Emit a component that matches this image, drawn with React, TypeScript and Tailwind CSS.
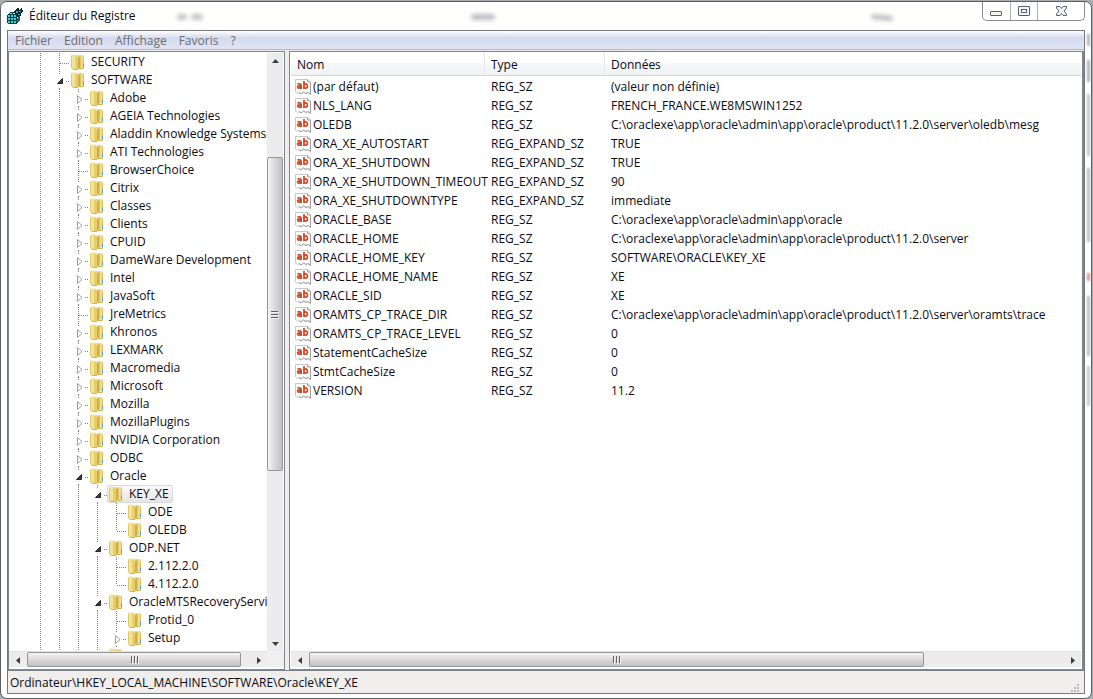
import React from "react";

type Toggle = "open" | "closed" | "leaf" | "last";
type Node = { label: string; depth: number; kind: Toggle; selected?: boolean };

const NODES: Node[] = [
  { label: "SECURITY", depth: 1, kind: "leaf" },
  { label: "SOFTWARE", depth: 1, kind: "open" },
  { label: "Adobe", depth: 2, kind: "closed" },
  { label: "AGEIA Technologies", depth: 2, kind: "closed" },
  { label: "Aladdin Knowledge Systems", depth: 2, kind: "closed" },
  { label: "ATI Technologies", depth: 2, kind: "closed" },
  { label: "BrowserChoice", depth: 2, kind: "leaf" },
  { label: "Citrix", depth: 2, kind: "closed" },
  { label: "Classes", depth: 2, kind: "closed" },
  { label: "Clients", depth: 2, kind: "closed" },
  { label: "CPUID", depth: 2, kind: "closed" },
  { label: "DameWare Development", depth: 2, kind: "closed" },
  { label: "Intel", depth: 2, kind: "closed" },
  { label: "JavaSoft", depth: 2, kind: "closed" },
  { label: "JreMetrics", depth: 2, kind: "leaf" },
  { label: "Khronos", depth: 2, kind: "closed" },
  { label: "LEXMARK", depth: 2, kind: "closed" },
  { label: "Macromedia", depth: 2, kind: "closed" },
  { label: "Microsoft", depth: 2, kind: "closed" },
  { label: "Mozilla", depth: 2, kind: "closed" },
  { label: "MozillaPlugins", depth: 2, kind: "closed" },
  { label: "NVIDIA Corporation", depth: 2, kind: "closed" },
  { label: "ODBC", depth: 2, kind: "closed" },
  { label: "Oracle", depth: 2, kind: "open" },
  { label: "KEY_XE", depth: 3, kind: "open", selected: true },
  { label: "ODE", depth: 4, kind: "leaf" },
  { label: "OLEDB", depth: 4, kind: "last" },
  { label: "ODP.NET", depth: 3, kind: "open" },
  { label: "2.112.2.0", depth: 4, kind: "leaf" },
  { label: "4.112.2.0", depth: 4, kind: "last" },
  { label: "OracleMTSRecoveryServic", depth: 3, kind: "open" },
  { label: "Protid_0", depth: 4, kind: "leaf" },
  { label: "Setup", depth: 4, kind: "closed" },
  { label: "", depth: 3, kind: "leaf" },
];

const VALUES: [string, string, string][] = [
  ["(par défaut)", "REG_SZ", "(valeur non définie)"],
  ["NLS_LANG", "REG_SZ", "FRENCH_FRANCE.WE8MSWIN1252"],
  ["OLEDB", "REG_SZ", "C:\\oraclexe\\app\\oracle\\admin\\app\\oracle\\product\\11.2.0\\server\\oledb\\mesg"],
  ["ORA_XE_AUTOSTART", "REG_EXPAND_SZ", "TRUE"],
  ["ORA_XE_SHUTDOWN", "REG_EXPAND_SZ", "TRUE"],
  ["ORA_XE_SHUTDOWN_TIMEOUT", "REG_EXPAND_SZ", "90"],
  ["ORA_XE_SHUTDOWNTYPE", "REG_EXPAND_SZ", "immediate"],
  ["ORACLE_BASE", "REG_SZ", "C:\\oraclexe\\app\\oracle\\admin\\app\\oracle"],
  ["ORACLE_HOME", "REG_SZ", "C:\\oraclexe\\app\\oracle\\admin\\app\\oracle\\product\\11.2.0\\server"],
  ["ORACLE_HOME_KEY", "REG_SZ", "SOFTWARE\\ORACLE\\KEY_XE"],
  ["ORACLE_HOME_NAME", "REG_SZ", "XE"],
  ["ORACLE_SID", "REG_SZ", "XE"],
  ["ORAMTS_CP_TRACE_DIR", "REG_SZ", "C:\\oraclexe\\app\\oracle\\admin\\app\\oracle\\product\\11.2.0\\server\\oramts\\trace"],
  ["ORAMTS_CP_TRACE_LEVEL", "REG_SZ", "0"],
  ["StatementCacheSize", "REG_SZ", "0"],
  ["StmtCacheSize", "REG_SZ", "0"],
  ["VERSION", "REG_SZ", "11.2"],
];

const DOTS = { stroke: "#808080", strokeDasharray: "1 1", fill: "none" };

function Guide() {
  return (
    <svg width="19" height="18" className="shrink-0" aria-hidden="true">
      <path d="M9.5 0V18" {...DOTS} />
    </svg>
  );
}

function Joint({ kind }: { kind: Toggle }) {
  return (
    <svg width="19" height="18" className="block" aria-hidden="true">
      {kind === "leaf" && <path d="M9.5 0V18M10 10.5H19" {...DOTS} />}
      {kind === "last" && <path d="M9.5 0V10M10 10.5H19" {...DOTS} />}
      {kind === "closed" && (
        <>
          <path d="M9.5 0V3M9.5 17V18M16 10.5H19" {...DOTS} />
          <path d="M8.5 6.5V14.5L13 10.5Z" fill="#fff" stroke="#a0a0a0" />
        </>
      )}
      {kind === "open" && (
        <>
          <path d="M9.5 0V3M9.5 17V18M16 10.5H19" {...DOTS} />
          <path d="M12.5 7.5V12.5H7.5Z" fill="#404040" stroke="#262626" strokeLinejoin="round" />
        </>
      )}
    </svg>
  );
}

function Folder() {
  return (
    <svg width="14" height="16" viewBox="0 0 14 16" className="shrink-0" aria-hidden="true">
      <path d="M5 1H11.5Q12.5 1 12.5 2V14.5H5Z" fill="#f0dd8c" />
      <path d="M12.5 2.5V14.5" stroke="#dcc25e" />
      <path d="M7 3L9.5 2V13L7 15Z" fill="#cfae48" />
      <path d="M0 1.5Q0 0.5 1 0.5H4.5Q7 1 7 3V15.5H2Q0 15 0 13.5Z" fill="#f3e49c" />
      <path d="M4 1.5Q7 2 7 4V15.5L4 14.5Z" fill="#e6cd6e" />
      <path d="M0.5 2V14" stroke="#e0c968" />
      <path d="M1 14.5L3 15.5H7L8 14.5H12.5" stroke="#d6b650" fill="none" />
      <path d="M12.5 9.5V13" stroke="#4da3d8" />
    </svg>
  );
}

function StringIcon() {
  return (
    <svg width="16" height="16" viewBox="0 0 16 16" className="shrink-0" aria-hidden="true">
      <path d="M0.5 0.5H12.5L15.5 3V15.5L13 13.5L11 14.5L8.5 13L6 15L4 13.5L2.5 14.5L0.5 13Z" fill="#fff" stroke="#c8c8c8" />
      <path d="M15.5 3V15.5L13 13.5L11 14.5L8.5 13L6 15L4 13.5" fill="none" stroke="#a0a0a0" />
      <path d="M12.5 0.5V3H15.5" fill="none" stroke="#a0a0a0" />
      <g fill="none" stroke="#d64a24" strokeWidth="1.8">
        <path d="M2.4 4.9H4.6Q6.1 4.9 6.1 6.4V10" />
        <path d="M6.1 7H4.2Q2.6 7 2.6 8.1Q2.6 9.2 4 9.2Q5.4 9.2 6.1 8.4" />
        <path d="M9 2V10" />
        <path d="M9 5.6Q9.8 4.9 10.9 4.9Q12.4 5.1 12.4 7Q12.4 9.1 10.8 9.2Q9.8 9.2 9 8.6" />
      </g>
    </svg>
  );
}

function RegistryIcon() {
  return (
    <svg width="16" height="16" viewBox="0 0 16 16" shapeRendering="crispEdges" aria-hidden="true">
      <path d="M0 7L3 4H7V6H10V16H1L0 15Z" fill="#053f45" />
      <path d="M1 7H3V9H1ZM4 7H6V9H4ZM7 7H9V9H7ZM1 10H3V12H1ZM4 10H6V12H4ZM7 10H9V12H7ZM1 13H3V15H1ZM4 13H6V15H4ZM7 13H9V15H7Z" fill="#35d6dc" />
      <path d="M3 5H5V6H3ZM6 5H7V6H6Z" fill="#9af4f4" />
      <path d="M7 3L9 1H10V0H12V2L15 0V2H16V3L14 5V7L12 9H10L8 6Z" fill="#08272b" />
      <path d="M9 3H11V5H9ZM12 3H14V4H12ZM11 6H13V7H11Z" fill="#22b8c0" />
      <path d="M10 10L13 8V12L10 15Z" fill="#0b6d75" />
    </svg>
  );
}

function Arrow({ dir }: { dir: "up" | "down" | "left" | "right" }) {
  const d = {
    up: "M4 9L7.5 5L11 9Z",
    down: "M4 6L7.5 10L11 6Z",
    left: "M9 4L5 7.5L9 11Z",
    right: "M6 4L10 7.5L6 11Z",
  }[dir];
  return (
    <svg width="15" height="15" viewBox="0 0 15 15" aria-hidden="true">
      <path d={d} fill="#3c3c3c" />
    </svg>
  );
}

function ScrollButton({ dir, label }: { dir: "up" | "down" | "left" | "right"; label: string }) {
  return (
    <button type="button" aria-label={label} className="flex size-4 shrink-0 items-center justify-center">
      <Arrow dir={dir} />
    </button>
  );
}

function HScroll({ thumb, rest }: { thumb: string; rest: string }) {
  return (
    <div className="flex h-4 shrink-0 border-t border-[#e2e2e2] bg-[#ececec] px-px">
      <ScrollButton dir="left" label="Défiler à gauche" />
      <div className="flex min-w-0 flex-1 px-px">
        <div
          className={`flex items-center justify-center rounded-xs border border-[#959595] bg-linear-to-b from-[#f4f4f4] from-0% via-[#dcdcde] via-45% to-[#c0c0c4] ${thumb}`}
        >
          <svg width="9" height="8" aria-hidden="true">
            <path d="M1.5 0V7M4.5 0V7M7.5 0V7" stroke="#606060" />
            <path d="M2.5 1V8M5.5 1V8M8.5 1V8" stroke="#f4f4f4" />
          </svg>
        </div>
        <div className={rest} />
      </div>
      <ScrollButton dir="right" label="Défiler à droite" />
    </div>
  );
}

function TreeRow({ node }: { node: Node }) {
  return (
    <li className="flex h-[18px]">
      {Array.from({ length: node.depth }, (_, i) => (
        <Guide key={i} />
      ))}
      {node.kind === "open" || node.kind === "closed" ? (
        <button type="button" aria-label={`Développer ${node.label}`} className="shrink-0">
          <Joint kind={node.kind} />
        </button>
      ) : (
        <span className="shrink-0">
          <Joint kind={node.kind} />
        </span>
      )}
      <button
        type="button"
        className={
          node.selected
            ? "flex shrink-0 items-center gap-1.5 rounded-xs border border-[#d9d9d9] bg-linear-to-b from-[#fafafa] to-[#e5e5e5] px-px pr-[3px] whitespace-nowrap"
            : "flex shrink-0 items-center gap-1.5 border border-transparent px-px pr-[3px] whitespace-nowrap"
        }
      >
        <Folder />
        {node.label}
      </button>
    </li>
  );
}

function TitleBar() {
  return (
    <header className="relative flex h-7 shrink-0 items-start justify-between">
      <div className="flex items-center gap-[6px] pt-[6px]">
        <RegistryIcon />
        <h1 className="text-xs leading-4">Éditeur du Registre</h1>
      </div>
      <div className="absolute top-[12px] left-[170px] h-[6px] w-[10px] rounded-full bg-[#c4c4c8] blur-[2px]" />
      <div className="absolute top-[12px] left-[184px] h-[6px] w-[12px] rounded-full bg-[#c4c4c8] blur-[2px]" />
      <div className="absolute top-[12px] left-[464px] h-[6px] w-[24px] rounded-full bg-[#bcbcc0] blur-[2px]" />
      <div className="absolute top-[13px] left-[864px] h-[5px] w-[22px] rotate-6 rounded-full bg-[#bcbcc0] blur-[2px]" />
      <div className="flex h-[19px] rounded-b-[5px] border border-t-0 border-[#8b8b8f] bg-white">
        <button type="button" aria-label="Réduire" className="flex w-[28px] items-center justify-center border-r border-[#b0b0b4]">
          <svg width="13" height="12" aria-hidden="true">
            <rect x="0.5" y="6.5" width="11" height="4" rx="0.5" fill="#f4f4f4" stroke="#5b5d70" />
          </svg>
        </button>
        <button type="button" aria-label="Agrandir" className="flex w-[27px] items-center justify-center border-r border-[#b0b0b4]">
          <svg width="13" height="12" aria-hidden="true">
            <rect x="0.5" y="1.5" width="11" height="9" rx="0.5" fill="#f4f4f4" stroke="#5b5d70" />
            <rect x="3.5" y="4.5" width="5" height="3" fill="#fff" stroke="#5b5d70" />
          </svg>
        </button>
        <button type="button" aria-label="Fermer" className="flex w-[46px] items-center justify-center">
          <svg width="13" height="12" aria-hidden="true">
            <path
              d="M1.5 1.5H5L6.5 3.5L8 1.5H11.5V3L9 6L11.5 9V10.5H8L6.5 8.5L5 10.5H1.5V9L4 6L1.5 3Z"
              fill="#f4f4f4"
              stroke="#5b5d70"
              strokeLinejoin="round"
            />
          </svg>
        </button>
      </div>
    </header>
  );
}

function TreePane() {
  return (
    <nav aria-label="Clés" className="flex w-[277px] shrink-0 flex-col border border-[#7f838b] bg-white">
      <div className="flex min-h-0 flex-1 pt-px">
        <ul className="min-h-0 min-w-0 flex-1 overflow-hidden pl-[22px]">
          {NODES.map((n, i) => (
            <TreeRow key={i} node={n} />
          ))}
        </ul>
        <div className="mr-px flex w-4 shrink-0 flex-col bg-[#ececec]">
          <ScrollButton dir="up" label="Défiler vers le haut" />
          <div className="flex min-h-0 flex-1 flex-col">
            <div className="grow-[88]" />
            <div className="flex grow-[304] items-center justify-center rounded-xs border border-[#959595] bg-linear-to-r from-[#f4f4f4] from-0% via-[#dcdcde] via-45% to-[#c0c0c4]">
              <svg width="8" height="9" aria-hidden="true">
                <path d="M0 1.5H7M0 4.5H7M0 7.5H7" stroke="#606060" />
                <path d="M1 2.5H8M1 5.5H8M1 8.5H8" stroke="#f4f4f4" />
              </svg>
            </div>
            <div className="grow-[164]" />
          </div>
          <ScrollButton dir="down" label="Défiler vers le bas" />
        </div>
      </div>
      <div className="flex shrink-0 pb-[2px]">
        <div className="min-w-0 flex-1">
          <HScroll thumb="grow-[213]" rest="grow-[8]" />
        </div>
        <div className="w-[17px] bg-[#f0f0f0]" />
      </div>
    </nav>
  );
}

function ValuesPane() {
  const head =
    "h-[23px] border-b border-[#d5d5d5] bg-linear-to-b from-white from-45% via-[#f7f8fa] via-45% to-[#f1f2f4] p-0 pt-[2px] pl-[6px] text-left font-normal";
  return (
    <main className="flex min-w-0 flex-1 flex-col border border-r-2 border-[#7f838b] bg-white px-px">
      <div className="min-h-0 flex-1 overflow-hidden pt-px">
        <table className="w-full table-fixed border-separate border-spacing-0">
          <thead>
            <tr>
              <th className={`${head} w-[194px] border-r border-r-[#e4e5e8]`}>Nom</th>
              <th className={`${head} w-[120px] border-r border-r-[#e4e5e8]`}>Type</th>
              <th className={head}>Données</th>
            </tr>
          </thead>
          <tbody className="before:block before:h-px">
            {VALUES.map(([name, type, data]) => (
              <tr key={name}>
                <td className="h-[19px] p-0 pl-1">
                  <div className="flex items-center gap-0.5 whitespace-nowrap">
                    <StringIcon />
                    {name}
                  </div>
                </td>
                <td className="h-[19px] p-0 pl-[6px]">{type}</td>
                <td className="h-[19px] p-0 pl-[6px] whitespace-nowrap">{data}</td>
              </tr>
            ))}
          </tbody>
        </table>
      </div>
      <div className="pb-[2px]">
        <HScroll thumb="grow-[615]" rest="grow-[141]" />
      </div>
    </main>
  );
}

export default function App() {
  return (
    <div className="relative flex h-screen flex-col overflow-hidden bg-[#a9acb0] pt-px pr-px font-['Open_Sans','Noto_Sans',sans-serif] text-xs leading-4 text-[#0a0a14]">
      <div className="flex min-h-0 flex-1 flex-col rounded-[7px] border border-[#5c5e63] bg-white px-[6px] pb-[4px]">
        <TitleBar />
        <div className="flex min-h-0 flex-1 flex-col border border-[#77797e] bg-[#f0eded]">
          <div
            role="menubar"
            className="flex h-[19px] shrink-0 items-center gap-3 border-b border-[#b4b8c6] bg-linear-to-b from-white from-0% via-[#d5daee] via-38% to-[#e0e4f3] px-[7px] pt-[2px] text-[#6d6d6d]"
          >
            {["Fichier", "Edition", "Affichage", "Favoris", "?"].map((m) => (
              <button key={m} type="button" role="menuitem">
                {m}
              </button>
            ))}
          </div>
          <div className="flex min-h-0 flex-1 gap-1 pt-px">
            <TreePane />
            <ValuesPane />
          </div>
          <footer className="flex h-[23px] shrink-0 items-center justify-between border-t border-[#7f838b] pt-px pr-1 pl-[2px]">
            <span>Ordinateur\HKEY_LOCAL_MACHINE\SOFTWARE\Oracle\KEY_XE</span>
            <svg width="10" height="10" className="self-end" aria-hidden="true">
              <path d="M7 1h2v2H7zM4 4h2v2H4zM7 4h2v2H7zM1 7h2v2H1zM4 7h2v2H4zM7 7h2v2H7z" fill="#bdb9b9" />
            </svg>
          </footer>
        </div>
      </div>
      <div className="absolute top-[34px] right-[3px] h-[12px] w-[3px] bg-[#b4b4b4] blur-[1px]" />
      <div className="absolute top-[60px] right-[3px] h-[22px] w-[3px] bg-[#b0b0b0] blur-[1px]" />
      <div className="absolute top-[94px] right-[3px] h-[62px] w-[3px] bg-[#c4c4c4] blur-[1px]" />
      <div className="absolute top-[168px] right-[3px] h-[74px] w-[3px] bg-[#bcbcbc] blur-[1px]" />
      <div className="absolute top-[273px] right-[3px] h-[8px] w-[3px] bg-[#dc9090] blur-[1px]" />
      <div className="absolute top-[296px] right-[3px] h-[60px] w-[3px] bg-[#bcbcbc] blur-[1px]" />
      <div className="absolute top-[366px] right-[3px] h-[40px] w-[3px] bg-[#c8c8c8] blur-[1px]" />
    </div>
  );
}
